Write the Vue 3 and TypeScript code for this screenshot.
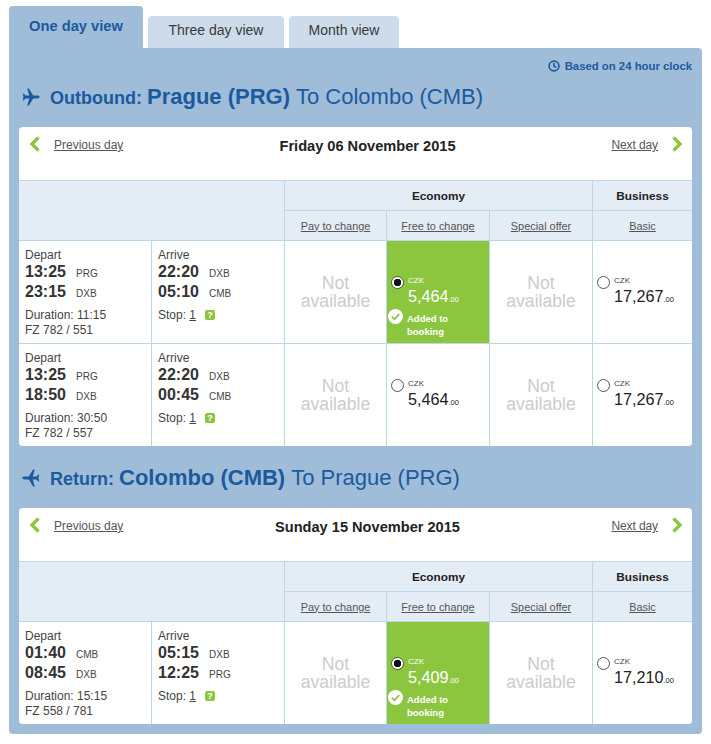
<script setup lang="ts">
interface Flight {
  d1: string; d1c: string; d2: string; d2c: string;
  a1: string; a1c: string; a2: string; a2c: string;
  dur: string; fz: string; eco: string; bus: string; selected: boolean;
}
interface Leg {
  kind: string; from: string; to: string; date: string; flip: boolean; flights: Flight[];
}
const legs: Leg[] = [
  {
    kind: 'Outbound:', from: 'Prague (PRG)', to: 'To Colombo (CMB)', date: 'Friday 06 November 2015', flip: false,
    flights: [
      { d1: '13:25', d1c: 'PRG', d2: '23:15', d2c: 'DXB', a1: '22:20', a1c: 'DXB', a2: '05:10', a2c: 'CMB', dur: '11:15', fz: 'FZ 782 / 551', eco: '5,464', bus: '17,267', selected: true },
      { d1: '13:25', d1c: 'PRG', d2: '18:50', d2c: 'DXB', a1: '22:20', a1c: 'DXB', a2: '00:45', a2c: 'CMB', dur: '30:50', fz: 'FZ 782 / 557', eco: '5,464', bus: '17,267', selected: false },
    ],
  },
  {
    kind: 'Return:', from: 'Colombo (CMB)', to: 'To Prague (PRG)', date: 'Sunday 15 November 2015', flip: true,
    flights: [
      { d1: '01:40', d1c: 'CMB', d2: '08:45', d2c: 'DXB', a1: '05:15', a1c: 'DXB', a2: '12:25', a2c: 'PRG', dur: '15:15', fz: 'FZ 558 / 781', eco: '5,409', bus: '17,210', selected: true },
    ],
  },
];
</script>

<template>
  <div class="page">
    <div class="tabs">
      <div class="tab active">One day view</div>
      <div class="tab t2">Three day view</div>
      <div class="tab t3">Month view</div>
    </div>
    <div class="panel">
      <div class="clock">
        <svg width="12" height="12" viewBox="0 0 12 12" fill="none" stroke="#1c5a9e" stroke-width="1.6"><circle cx="6" cy="6" r="4.9" /><path d="M6 3v3.2l2.2 1.2" /></svg>
        <span>Based on 24 hour clock</span>
      </div>
      <section v-for="leg in legs" :key="leg.kind" class="leg">
        <h2 class="heading">
          <svg class="plane" :class="{ flip: leg.flip }" width="18" height="18" viewBox="0 0 18 18" fill="#1c5a9e"><path d="M17.6 9c0-.9-1-1.4-2.2-1.4h-4.2L6.9.6H5.2l2.1 7H3.4L2 5.8H.7L1.5 9 .7 12.2H2l1.4-1.8h3.9l-2.1 7h1.7l4.3-7h4.2c1.2 0 2.2-.5 2.2-1.4z" /></svg>
          <span class="kind">{{ leg.kind }}</span>
          <strong class="from">{{ leg.from }}</strong>
          <span class="to">{{ leg.to }}</span>
        </h2>
        <div class="card">
          <div class="datebar">
            <div class="nav">
              <svg width="12" height="16" viewBox="0 0 12 16"><path d="M9.5 1.5 3 8l6.5 6.5" fill="none" stroke="#8cc63f" stroke-width="3.4" /></svg>
              <a class="navlink prev">Previous day</a>
            </div>
            <div class="date">{{ leg.date }}</div>
            <div class="nav right">
              <a class="navlink next">Next day</a>
              <svg width="12" height="16" viewBox="0 0 12 16"><path d="M2.5 1.5 9 8l-6.5 6.5" fill="none" stroke="#8cc63f" stroke-width="3.4" /></svg>
            </div>
          </div>
          <div class="grid">
            <div class="h blank"></div>
            <div class="h eco">Economy</div>
            <div class="h bus">Business</div>
            <div class="h sub"><a>Pay to change</a></div>
            <div class="h sub"><a>Free to change</a></div>
            <div class="h sub"><a>Special offer</a></div>
            <div class="h sub last"><a>Basic</a></div>
            <template v-for="f in leg.flights" :key="f.fz">
              <div class="c info">
                <div class="lbl">Depart</div>
                <div class="time"><b>{{ f.d1 }}</b><span>{{ f.d1c }}</span></div>
                <div class="time"><b>{{ f.d2 }}</b><span>{{ f.d2c }}</span></div>
                <div class="meta">Duration: {{ f.dur }}</div>
                <div class="lbl2">{{ f.fz }}</div>
              </div>
              <div class="c info">
                <div class="lbl">Arrive</div>
                <div class="time"><b>{{ f.a1 }}</b><span>{{ f.a1c }}</span></div>
                <div class="time"><b>{{ f.a2 }}</b><span>{{ f.a2c }}</span></div>
                <div class="meta">Stop: <u>1</u><i class="q">?</i></div>
              </div>
              <div class="c na"><span class="l">Not</span><span class="l">available</span></div>
              <div class="c price" :class="{ sel: f.selected }">
                <div class="fare">
                  <span class="radio"></span>
                  <div>
                    <div class="cur">CZK</div>
                    <div class="amt">{{ f.eco }}<small>.00</small></div>
                  </div>
                </div>
                <div v-if="f.selected" class="added">
                  <svg width="15" height="15" viewBox="0 0 15 15"><circle cx="7.5" cy="7.5" r="7.5" fill="#fff" /><path d="M3.8 7.7l2.6 2.6 4.8-5.2" fill="none" stroke="#8cc63f" stroke-width="1.8" /></svg>
                  <span class="addtxt"><span class="l">Added to</span><span class="l">booking</span></span>
                </div>
              </div>
              <div class="c na"><span class="l">Not</span><span class="l">available</span></div>
              <div class="c price last">
                <div class="fare">
                  <span class="radio"></span>
                  <div>
                    <div class="cur">CZK</div>
                    <div class="amt">{{ f.bus }}<small>.00</small></div>
                  </div>
                </div>
              </div>
            </template>
          </div>
        </div>
      </section>
    </div>
  </div>
</template>

<style scoped>
.page { width: 711px; height: 744px; padding: 6px 9px 0; box-sizing: border-box; font-family: "Liberation Sans", Arial, sans-serif; color: #333; background: #fff; }
.tabs { display: flex; align-items: flex-end; gap: 5px; height: 42px; }
.tab { height: 32px; box-sizing: border-box; background: #cddbea; border-radius: 4px 4px 0 0; text-align: center; font-size: 14px; line-height: 29px; color: #3a3a3a; }
.t2 { width: 136px; }
.t3 { width: 110px; }
.active { width: 134px; height: 42px; background: #9fbdd9; color: #1c5a9e; font-size: 14.7px; font-weight: bold; line-height: 40px; }
.panel { width: 693px; height: 686px; box-sizing: border-box; background: #9fbdd9; border-radius: 0 4px 4px 4px; padding: 0 10px; }
.clock { height: 34px; display: flex; align-items: center; justify-content: flex-end; gap: 5px; font-size: 11.35px; font-weight: bold; color: #1c5a9e; padding-top: 2px; box-sizing: border-box; }
.leg + .leg { margin-top: 17px; }
.heading { margin: 0 0 14px; height: 31px; box-sizing: border-box; padding: 2px 0 0 3px; display: flex; align-items: baseline; font-weight: normal; color: #1c5a9e; white-space: nowrap; }
.plane { align-self: center; margin-right: 10px; flex: none; position: relative; top: -2px; }
.flip { transform: scaleX(-1); }
.kind { font-size: 18px; font-weight: bold; margin-right: 5px; }
.from { font-size: 22px; margin-right: 6px; }
.to { font-size: 22px; }
.card { width: 673px; background: #fff; border-radius: 4px; overflow: hidden; }
.datebar { height: 54px; position: relative; display: flex; justify-content: space-between; padding: 9px 9px 0 10px; box-sizing: border-box; border-bottom: 1px solid #bcd8e8; }
.nav { display: flex; align-items: flex-start; gap: 13px; height: 18px; }
.nav.right { gap: 13px; }
.navlink { font-size: 12px; color: #555; text-decoration: underline; line-height: 17px; margin-top: 1px; }
.next { letter-spacing: -0.1px; }
.date { position: absolute; left: 24px; right: 0; top: 11px; text-align: center; font-size: 14.6px; font-weight: bold; color: #222; line-height: 17px; }
.grid { display: grid; grid-template-columns: 133px 133px 102px 103px 103px 99px; }
.h { background: #e4ecf5; display: flex; align-items: center; justify-content: center; font-size: 11.8px; }
.blank { grid-row: span 2; grid-column: span 2; border-right: 1px solid #bcd8e8; border-bottom: 1px solid #bcd8e8; }
.eco { grid-column: span 3; height: 30px; font-weight: bold; border-right: 1px solid #bcd8e8; border-bottom: 1px solid #bcd8e8; box-sizing: border-box; color: #222; }
.bus { height: 30px; font-weight: bold; border-bottom: 1px solid #bcd8e8; box-sizing: border-box; color: #222; }
.sub { height: 30px; box-sizing: border-box; font-size: 10.9px; color: #555; border-right: 1px solid #bcd8e8; border-bottom: 1px solid #bcd8e8; }
.sub a { text-decoration: underline; }
.sub.last { border-right: 0; }
.c { height: 103px; box-sizing: border-box; border-right: 1px solid #bcd8e8; border-bottom: 1px solid #bcd8e8; background: #fff; }
.c.last { border-right: 0; }
.grid > .c:nth-last-child(-n + 6) { border-bottom: 0; height: 102px; }
.info { padding: 7px 0 0 6px; font-size: 12px; color: #444; }
.lbl { line-height: 14px; }
.time { display: flex; align-items: baseline; line-height: 20px; height: 20px; }
.time b { font-size: 16px; color: #333; width: 51px; }
.time span { font-size: 10px; color: #444; }
.meta { margin-top: 6px; line-height: 15px; }
.lbl2 { line-height: 15px; }
.q { display: inline-block; margin-left: 9px; width: 10px; height: 10px; background: #8cc63f; border-radius: 2px; color: #fff; font-size: 9px; font-style: normal; font-weight: bold; line-height: 10px; text-align: center; vertical-align: 1px; }
.na { display: flex; flex-direction: column; align-items: center; justify-content: center; text-align: center; font-size: 17.6px; color: #ccc; }
.l { display: block; height: 18px; line-height: 18px; }
.price { padding: 35px 0 0 4px; position: relative; }
.fare { display: flex; gap: 4px; }
.radio { width: 13px; height: 13px; box-sizing: border-box; border: 1px solid #555; border-radius: 50%; background: #fff; flex: none; }
.cur { font-size: 8px; line-height: 9px; color: #444; }
.amt { font-size: 16.2px; line-height: 20px; color: #222; margin-top: 1px; white-space: nowrap; }
.amt small { font-size: 7.5px; }
.sel { background: #8cc63f; padding-top: 35px; }
.sel .cur, .sel .amt { color: #fff; }
.sel .radio { background: radial-gradient(circle, #111 0 3.5px, #fff 4px); }
.added { display: flex; gap: 4px; margin-top: -1px; margin-left: -3px; font-size: 9.5px; font-weight: bold; color: #fff; }
.addtxt { margin-top: 3px; }
.addtxt .l { height: 13px; line-height: 13px; }
</style>
